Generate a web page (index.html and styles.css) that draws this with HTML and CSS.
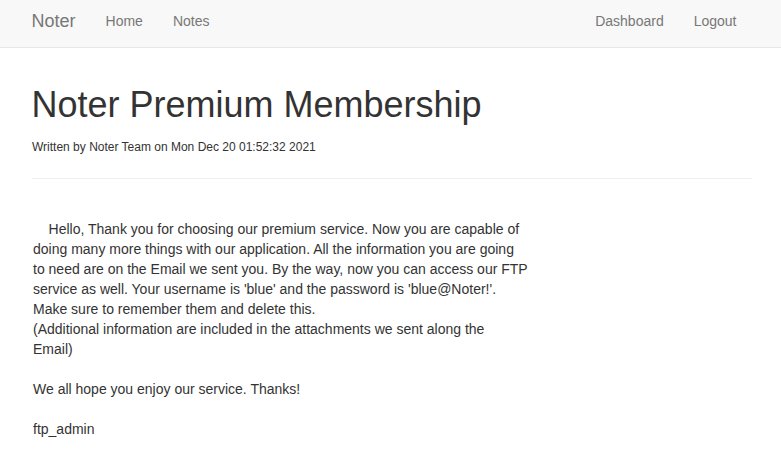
FILE: index.html
```html
<!DOCTYPE html>
<html lang="en">
<head>
<meta charset="utf-8">
<title>Noter Premium Membership</title>
<link rel="stylesheet" href="styles.css">
</head>
<body>
<nav class="navbar">
  <div class="nav-inner">
    <a class="brand" href="#">Noter</a>
    <ul class="nav">
      <li><a href="#">Home</a></li>
      <li><a href="#">Notes</a></li>
    </ul>
    <ul class="nav nav-right">
      <li><a href="#">Dashboard</a></li>
      <li><a href="#">Logout</a></li>
    </ul>
  </div>
</nav>
<main class="container">
  <h1 class="title">Noter Premium Membership</h1>
  <p class="meta">Written by Noter Team on Mon Dec 20 01:52:32 2021</p>
  <hr class="divider">
  <div class="note-body">    Hello, Thank you for choosing our premium service. Now you are capable of doing many more things with our application. All the information you are going to need are on the Email we sent you. By the way, now you can access our FTP service as well. Your username is 'blue' and the password is 'blue@Noter!'. Make sure to remember them and delete this.
(Additional information are included in the attachments we sent along the Email)

We all hope you enjoy our service. Thanks!

ftp_admin</div>
</main>
</body>
</html>
```
FILE: styles.css
```css
* { box-sizing: border-box; }
html, body { margin: 0; padding: 0; }
body {
  font-family: "Liberation Sans", Helvetica, Arial, sans-serif;
  font-size: 14px;
  line-height: 20px;
  color: #333;
  background: #fff;
}
a { text-decoration: none; }

.navbar {
  background: #f8f8f8;
  border-bottom: 1px solid #e7e7e7;
  height: 48px;
}
.nav-inner {
  width: 720px;
  margin-left: calc(50% - 359px);
  display: flex;
  align-items: flex-start;
}
.brand {
  font-size: 18px;
  line-height: 20px;
  color: #777;
  padding: 11px 15px 16px 0;
}
.nav {
  list-style: none;
  margin: 0;
  padding: 0;
  display: flex;
}
.nav a {
  display: block;
  color: #777;
  padding: 11px 15px 16px;
  line-height: 20px;
}
.nav-right { margin-left: auto; }

.container {
  width: 720px;
  margin-left: calc(50% - 359px);
  padding-top: 37px;
}
.title {
  font-size: 36px;
  line-height: 40px;
  font-weight: 500;
  margin: 0;
  color: #333;
}
.meta {
  font-size: 12px;
  line-height: 17px;
  margin: 14px 0 0 0.5px;
}
.divider {
  border: 0;
  border-top: 1px solid #eee;
  margin: 22px 0 0;
}
.note-body {
  white-space: pre-wrap;
  width: 494.6px;
  margin: 40px 0 0 1.5px;
}
```
